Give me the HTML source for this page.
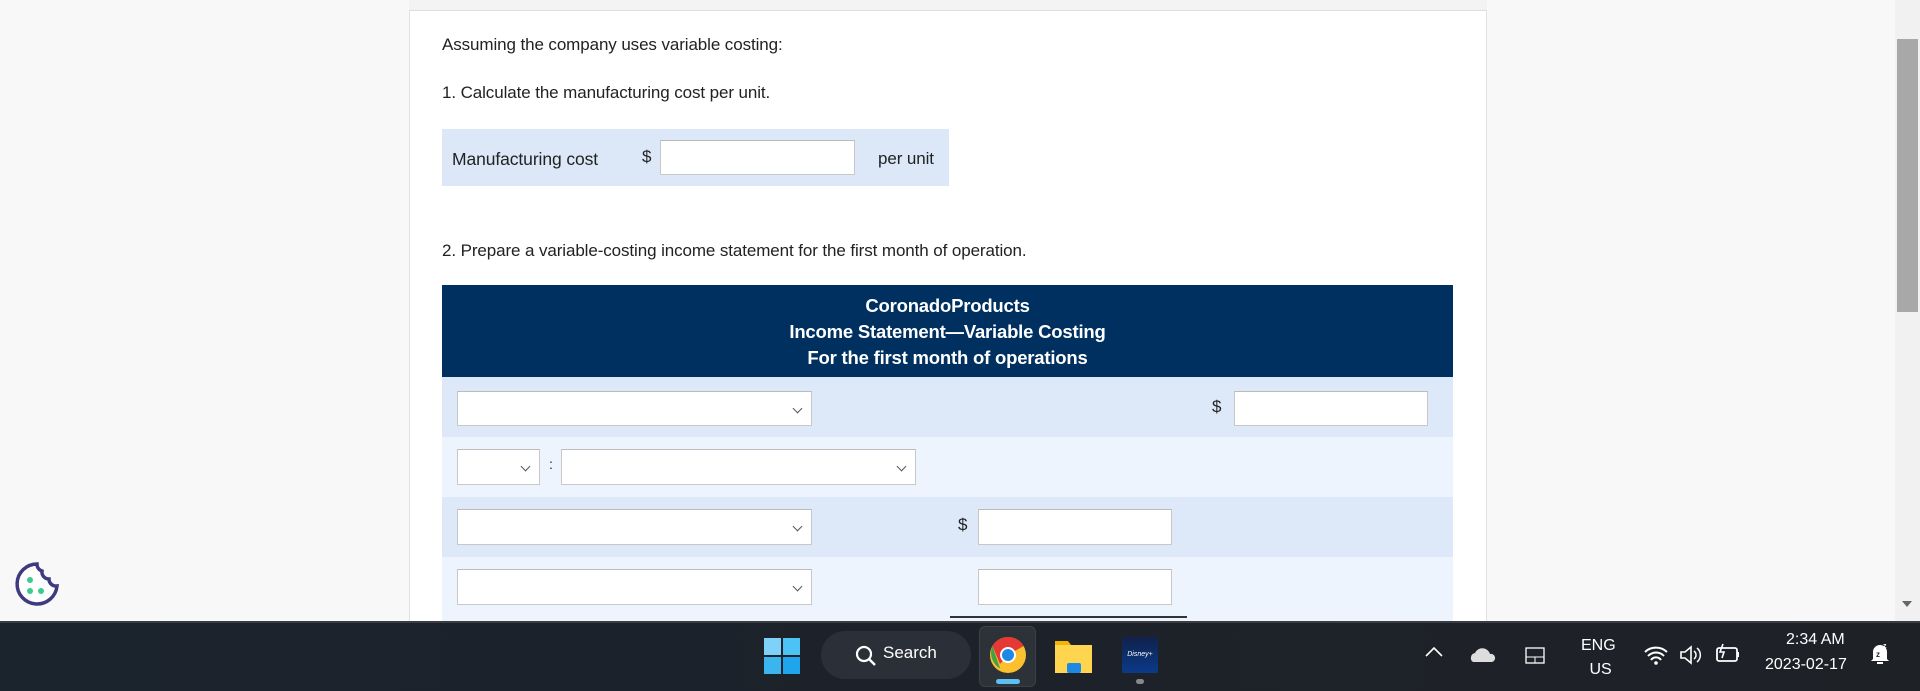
<!DOCTYPE html>
<html><head><meta charset="utf-8"><style>
*{margin:0;padding:0;box-sizing:border-box}
body{width:1920px;height:691px;overflow:hidden;background:#f8f8f8;font-family:"Liberation Sans",sans-serif;position:relative;color:#222}
.a{position:absolute}
.panel{left:409px;top:0;width:1078px;height:621px;background:#fff;border-left:1px solid #e2e2e2;border-right:1px solid #e2e2e2}
.topbar{left:409px;top:0;width:1078px;height:11px;background:#f3f3f3;border-bottom:1px solid #dedede}
.t{font-size:17px;color:#222;white-space:nowrap;letter-spacing:-0.1px}
.inp{background:#fff;border:1px solid #c8c8c8;border-top-color:#bbb}
.sel{background:#fff;border:1px solid #c8c8c8;border-top-color:#bbb}
.sel::after{content:"";position:absolute;right:10px;top:13px;width:6px;height:6px;border-right:1.6px solid #555;border-bottom:1.6px solid #555;transform:rotate(45deg)}
.hd{left:442px;top:285px;width:1011px;height:92px;background:#00305f;color:#fff;font-weight:bold;font-size:18.5px;text-align:center;line-height:26px;padding-top:8px;letter-spacing:-0.2px}
.tb{left:0;top:621px;width:1920px;height:70px;background:linear-gradient(90deg,#1b232d,#1d222a 50%,#1e2227);border-top:2px solid #3a3d42}
.w{color:#fff;font-size:16px;white-space:nowrap}
</style></head><body>
<div class="a panel"></div>
<div class="a topbar"></div>
<div class="a t" style="left:442px;top:35px">Assuming the company uses variable costing:</div>
<div class="a t" style="left:442px;top:83px">1. Calculate the manufacturing cost per unit.</div>
<div class="a" style="left:442px;top:129px;width:507px;height:57px;background:#dce8f8"></div>
<div class="a t" style="left:452px;top:149px;font-size:17.5px">Manufacturing cost</div>
<div class="a t" style="left:642px;top:147px">$</div>
<div class="a inp" style="left:660px;top:140px;width:195px;height:35px"></div>
<div class="a t" style="left:878px;top:149px">per unit</div>
<div class="a t" style="left:442px;top:241px">2. Prepare a variable-costing income statement for the first month of operation.</div>
<div class="a hd">CoronadoProducts<br>Income Statement—Variable Costing<br>For the first month of operations</div>
<div class="a" style="left:442px;top:377px;width:1011px;height:60px;background:#dde8f8"></div>
<div class="a" style="left:442px;top:437px;width:1011px;height:60px;background:#edf4fd"></div>
<div class="a" style="left:442px;top:497px;width:1011px;height:60px;background:#dde8f8"></div>
<div class="a" style="left:442px;top:557px;width:1011px;height:64px;background:#edf4fd"></div>
<div class="a sel" style="left:457px;top:391px;width:355px;height:35px"></div>
<div class="a t" style="left:1212px;top:397px">$</div>
<div class="a inp" style="left:1234px;top:391px;width:194px;height:35px"></div>
<div class="a sel" style="left:457px;top:449px;width:83px;height:36px"></div>
<div class="a t" style="left:549px;top:456px;font-size:14px">:</div>
<div class="a sel" style="left:561px;top:449px;width:355px;height:36px"></div>
<div class="a sel" style="left:457px;top:509px;width:355px;height:36px"></div>
<div class="a t" style="left:958px;top:515px">$</div>
<div class="a inp" style="left:978px;top:509px;width:194px;height:36px"></div>
<div class="a sel" style="left:457px;top:569px;width:355px;height:36px"></div>
<div class="a inp" style="left:978px;top:569px;width:194px;height:36px"></div>
<div class="a" style="left:950px;top:616px;width:237px;height:2px;background:#333"></div>
<div class="a" style="left:1895px;top:0;width:25px;height:621px;background:#f1f1f1"></div>
<div class="a" style="left:1897px;top:39px;width:21px;height:273px;background:#a8a8a8"></div>
<div class="a" style="left:1902px;top:601px;width:0;height:0;border-left:5px solid transparent;border-right:5px solid transparent;border-top:6px solid #666"></div>
<svg class="a" style="left:13px;top:560px" width="48" height="48" viewBox="0 0 48 48"><path d="M24 4a20 20 0 1 0 20 22 7 7 0 0 1-8-7 7 7 0 0 1-7-8 7 7 0 0 1-5-7z" fill="#fff" stroke="#3d3a7e" stroke-width="3.5"/><circle cx="17" cy="20" r="3" fill="#3ccb8c"/><circle cx="17" cy="31" r="3" fill="#3ccb8c"/><circle cx="28" cy="31" r="3" fill="#3ccb8c"/></svg>
<div class="a tb"></div>
<svg class="a" style="left:764px;top:638px" width="36" height="36"><rect x="0" y="0" width="17" height="17" fill="#7ed1f7"/><rect x="19" y="0" width="17" height="17" fill="#4cc2f5"/><rect x="0" y="19" width="17" height="17" fill="#3bb5f0"/><rect x="19" y="19" width="17" height="17" fill="#1ea5ec"/></svg>
<div class="a" style="left:821px;top:631px;width:150px;height:48px;border-radius:24px;background:#2b3038"></div>
<svg class="a" style="left:854px;top:644px" width="24" height="24"><circle cx="10" cy="10" r="7" fill="none" stroke="#fff" stroke-width="2.2"/><line x1="15" y1="15" x2="21" y2="21" stroke="#fff" stroke-width="2.4"/></svg>
<div class="a w" style="left:883px;top:643px;font-size:17px">Search</div>
<div class="a" style="left:979px;top:626px;width:57px;height:61px;border-radius:6px;background:#2d3239;border:1px solid #3c4048"></div>
<svg class="a" style="left:990px;top:637px" width="36" height="36" viewBox="0 0 36 36"><circle cx="18" cy="18" r="18" fill="#fbc02d"/><path d="M2.4 9A18 18 0 0 1 33.6 9L18 18 10 27 2.4 9z" fill="#e53935"/><path d="M2.4 9 10.2 31.6A18 18 0 0 1 2.4 9z" fill="#43a047"/><circle cx="18" cy="18" r="8" fill="#fff"/><circle cx="18" cy="18" r="6" fill="#1e88e5"/></svg>
<div class="a" style="left:996px;top:679px;width:24px;height:5px;border-radius:3px;background:#5cc0f5"></div>
<svg class="a" style="left:1055px;top:637px" width="37" height="36"><path d="M0 4h13l3 4h21v28H0z" fill="#f4b400"/><rect x="0" y="8" width="37" height="28" fill="#ffd54f"/><rect x="12" y="26" width="14" height="10" rx="2" fill="#1e88e5"/></svg>
<div class="a" style="left:1122px;top:637px;width:36px;height:36px;background:linear-gradient(#10214a,#0b3a8a);border-radius:2px;color:#fff;font-size:7px;text-align:center;line-height:36px;font-style:italic">Disney+</div>
<div class="a" style="left:1136px;top:679px;width:8px;height:5px;border-radius:3px;background:#888"></div>
<svg class="a" style="left:1424px;top:645px" width="20" height="14"><path d="M2 11 10 3l8 8" fill="none" stroke="#fff" stroke-width="1.6"/></svg>
<svg class="a" style="left:1469px;top:645px" width="28" height="18"><path d="M4 17a5 5 0 0 1 2-9 8 8 0 0 1 15 1 4 4 0 0 1 2 8z" fill="#ddd"/></svg>
<svg class="a" style="left:1525px;top:647px" width="20" height="18"><rect x="1" y="1" width="18" height="15" fill="none" stroke="#fff" stroke-width="1.3"/><line x1="1" y1="10" x2="19" y2="10" stroke="#fff"/><line x1="10" y1="10" x2="10" y2="16" stroke="#fff"/></svg>
<div class="a w" style="left:1581px;top:634px;text-align:center;line-height:24px;font-size:16px">ENG<br>&nbsp;US</div>
<svg class="a" style="left:1643px;top:644px" width="26" height="22"><path d="M2 8a16 16 0 0 1 22 0M5 12a11 11 0 0 1 16 0M8 16a6 6 0 0 1 10 0" fill="none" stroke="#fff" stroke-width="2"/><circle cx="13" cy="19" r="1.8" fill="#fff"/></svg>
<svg class="a" style="left:1679px;top:644px" width="26" height="22"><path d="M2 8h4l6-5v16l-6-5H2z" fill="none" stroke="#fff" stroke-width="1.6"/><path d="M15 7a5 5 0 0 1 0 8M18 4a9 9 0 0 1 0 14" fill="none" stroke="#fff" stroke-width="1.5"/></svg>
<svg class="a" style="left:1715px;top:643px" width="26" height="22"><rect x="2" y="5" width="20" height="13" rx="2" fill="none" stroke="#fff" stroke-width="1.8"/><rect x="22" y="9" width="2" height="5" fill="#fff"/><path d="M8 1 5 9h4l-2 6" fill="none" stroke="#fff" stroke-width="1.6"/></svg>
<div class="a w" style="left:1786px;top:631px;font-size:16px">2:34 AM</div>
<div class="a w" style="left:1765px;top:656px;font-size:16px">2023-02-17</div>
<svg class="a" style="left:1868px;top:641px" width="24" height="26"><path d="M5 18V11a7 7 0 0 1 14 0v7l2 2H3z" fill="#fff"/><rect x="9" y="21" width="6" height="2" fill="#fff"/><text x="8" y="16" font-size="8" font-family="Liberation Sans" font-weight="bold" fill="#1d222a">z</text><text x="15" y="7" font-size="7" font-family="Liberation Sans" font-weight="bold" fill="#fff">z</text></svg>
</body></html>
